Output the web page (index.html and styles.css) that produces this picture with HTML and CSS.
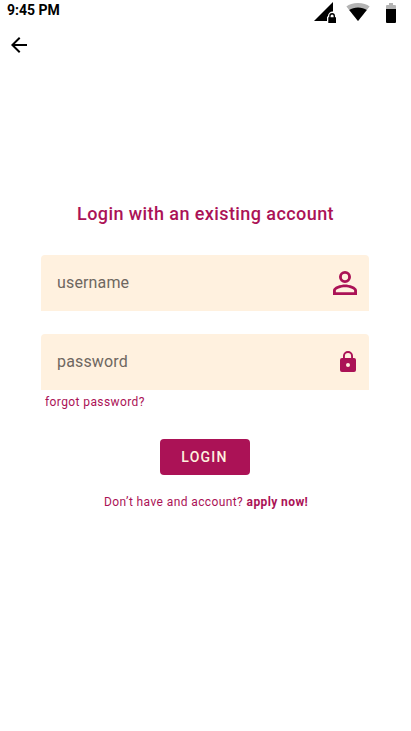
FILE: index.html
```html
<!DOCTYPE html>
<html lang="en">
<head>
<meta charset="utf-8">
<title>Login</title>
<link rel="stylesheet" href="styles.css">
</head>
<body>
<header class="status">
  <span class="time">9:45 PM</span>
  <svg class="signal" viewBox="0 0 22 22"><path d="M0 19 19 0v9.500a4.500 4.500 0 0 0-5 4.500l-1 1v4z"/><path fill-rule="evenodd" d="M14.300 15.200h.9V14a2.900 2.900 0 0 1 5.800 0v1.200h1V21h-7.700zm2.300 0h3V14a1.500 1.500 0 0 0-3 0z"/></svg>
  <svg class="wifi" viewBox="0 0 24 18"><path class="dim" d="M12 18 .4 3.500C3 1.500 7 0 12 0s9 1.500 11.600 3.500z"/><path d="M12 18 3.200 7.100C5.500 5.400 8.600 4.500 12 4.500s6.500.9 8.800 2.600z"/></svg>
  <svg class="battery" viewBox="0 0 10 20"><path class="dim" d="M3 0h4v2h2a1 1 0 0 1 1 1v3H0V3a1 1 0 0 1 1-1h2z"/><path d="M0 6h10v13a1 1 0 0 1-1 1H1a1 1 0 0 1-1-1z"/></svg>
</header>
<nav class="toolbar">
  <svg class="back" viewBox="0 0 24 24"><path d="M20 11H7.830l5.590-5.590L12 4l-8 8 8 8 1.410-1.410L7.830 13H20z"/></svg>
</nav>
<main class="login">
  <h1 class="title">Login with an existing account</h1>
  <div class="field">
    <span class="label">username</span>
    <svg class="person" viewBox="4 4 16 16"><path d="M12 5.900a2.100 2.100 0 1 1 0 4.200 2.100 2.100 0 0 1 0-4.200m0 9c2.970 0 6.100 1.460 6.100 2.100v1.100H5.900V17c0-.64 3.130-2.100 6.100-2.100M12 4a4 4 0 1 0 0 8 4 4 0 0 0 0-8m0 9c-2.670 0-8 1.340-8 4v3h16v-3c0-2.660-5.330-4-8-4"/></svg>
  </div>
  <div class="field">
    <span class="label">password</span>
    <svg class="lock" viewBox="0 0 24 24"><path d="M18 8h-1V6A5 5 0 0 0 7 6v2H6a2 2 0 0 0-2 2v10a2 2 0 0 0 2 2h12a2 2 0 0 0 2-2V10a2 2 0 0 0-2-2m-6 9a2 2 0 1 1 0-4 2 2 0 0 1 0 4m3.100-9H8.900V6a3.100 3.100 0 0 1 6.200 0z"/></svg>
  </div>
  <a class="forgot">forgot password?</a>
  <button class="submit">LOGIN</button>
  <p class="signup">Don’t have and account? <b>apply now!</b></p>
</main>
</body>
</html>
```
FILE: styles.css
```css
* { box-sizing: border-box; }
body {
  margin: 0;
  height: 731px;
  overflow: hidden;
  background: #fff;
  color: #000;
  font-family: Roboto, sans-serif;
}
svg { display: block; flex: none; }
.status {
  display: flex;
  align-items: flex-start;
  height: 24px;
  padding: 2px 15px 0 7px;
}
.time {
  flex: 1;
  font-size: 14px;
  font-weight: 700;
  line-height: 16px;
}
.signal { width: 22px; height: 22px; }
.wifi { width: 24px; height: 18px; margin: 1px 0 0 10px; }
.battery { width: 10px; height: 20px; margin: 1px 0 0 16px; }
.dim { fill: #b3b3b3; }
.toolbar { padding: 9px 7px 0; height: 42px; }
.back { width: 24px; height: 24px; }
.login {
  display: flex;
  flex-direction: column;
  width: 328px;
  margin: 136px 0 0 41px;
  color: #ab1256;
}
.title {
  margin: 0 0 29px 36px;
  font-size: 18px;
  font-weight: 500;
  line-height: 24px;
  letter-spacing: 0.42px;
  white-space: nowrap;
}
.field {
  display: flex;
  align-items: center;
  justify-content: space-between;
  height: 56px;
  padding: 0 12px 0 16px;
  background: #fff1df;
  border-radius: 4px 4px 0 0;
}
.field + .field { margin-top: 23px; padding-right: 9px; }
.label {
  color: #6e675f;
  font-size: 16px;
  line-height: 24px;
  letter-spacing: 0.15px;
}
.person, .lock { width: 24px; height: 24px; fill: #ab1256; }
.forgot {
  margin: 4px 0 0 4px;
  font-size: 12px;
  line-height: 16px;
  letter-spacing: 0.4px;
}
.submit {
  width: 90px;
  height: 36px;
  margin: 29px 0 0 119px;
  padding: 0 1px 0 0;
  border: 0;
  border-radius: 4px;
  background: #ab1256;
  color: #fff1df;
  font: 500 14px/16px Roboto, sans-serif;
  letter-spacing: 1.25px;
}
.signup {
  margin: 19px 0 0 63px;
  font-size: 12px;
  line-height: 16px;
  letter-spacing: 0.4px;
  white-space: nowrap;
}
.signup b { font-weight: 700; }
```
